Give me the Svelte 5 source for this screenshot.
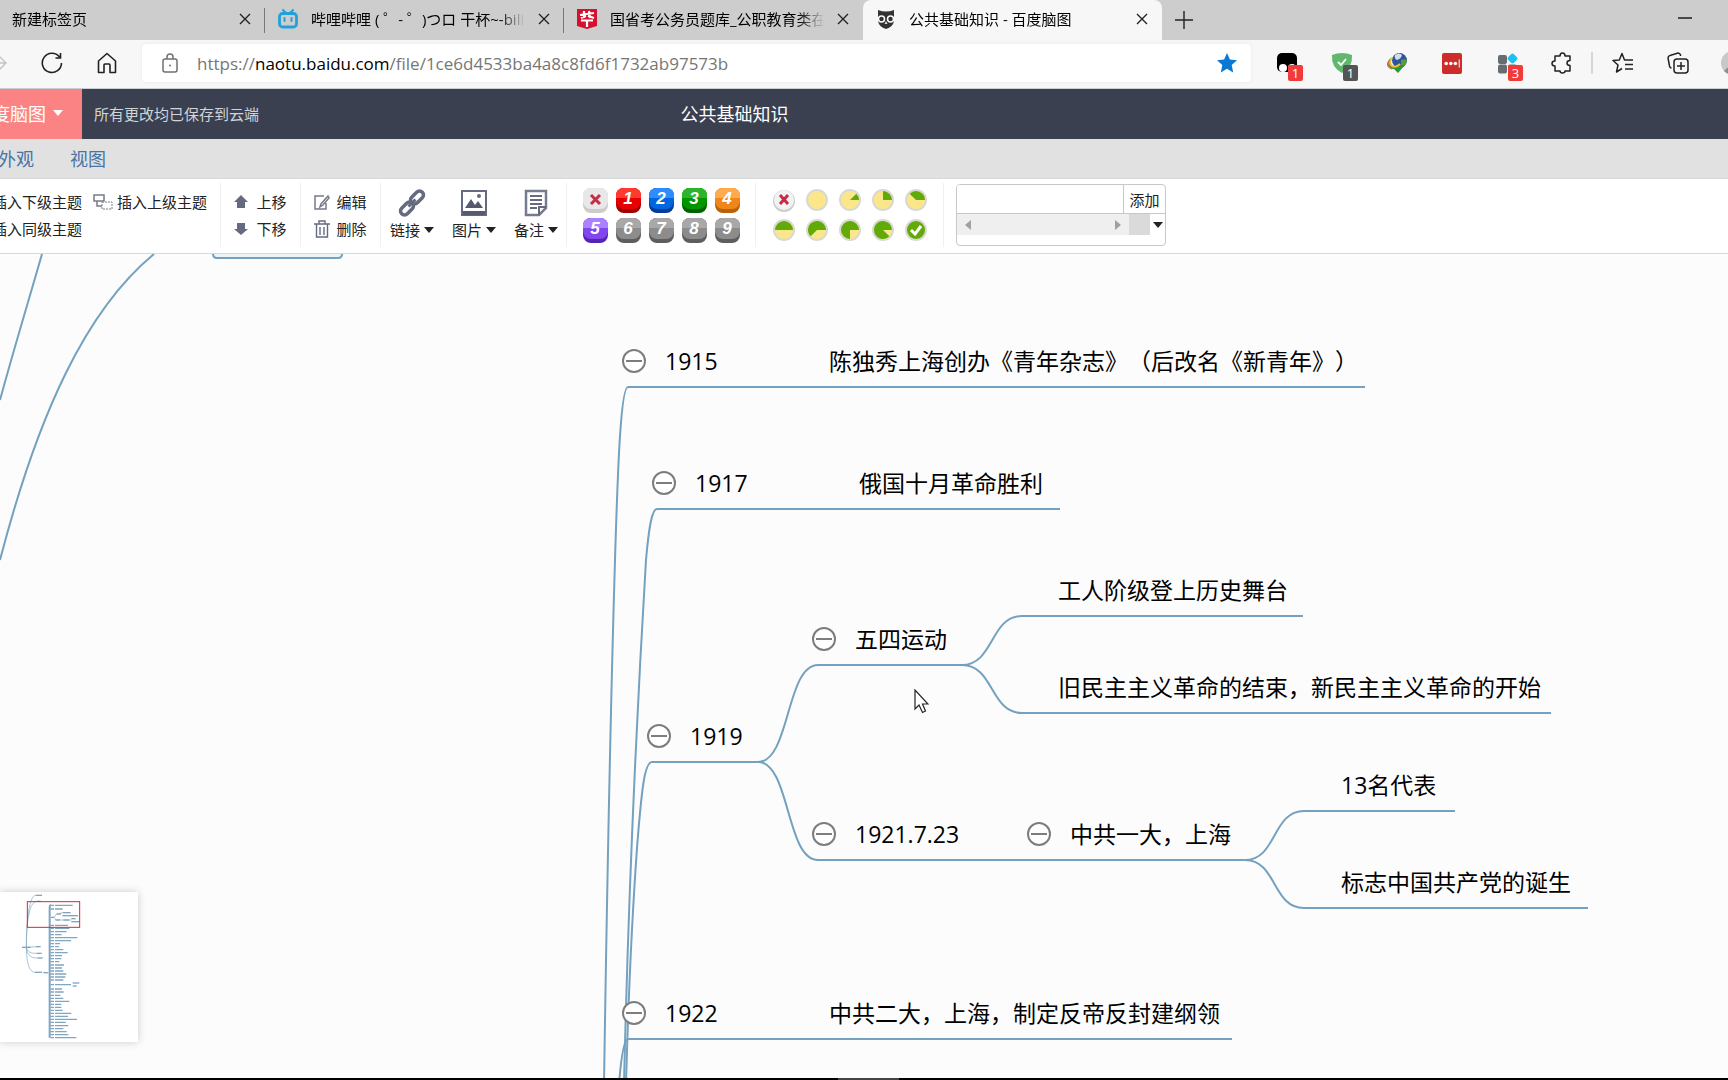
<script lang="ts">
  interface TopicNode {
    x: number;
    y: number;
    text: string;
    toggle?: boolean;
  }

  const TABS = [
    { title: '新建标签页', icon: 'blank', active: false },
    { title: '哔哩哔哩 ( ゜- ゜)つロ 干杯~-bilibili', icon: 'bili', active: false },
    { title: '国省考公务员题库_公职教育类在线', icon: 'exam', active: false },
    { title: '公共基础知识 - 百度脑图', icon: 'owl', active: true }
  ];

  const PRIORITIES = [
    { value: 1, top: '#ff3a2e', mid: '#e60000', edge: '#a00000' },
    { value: 2, top: '#2e8cff', mid: '#0066e0', edge: '#003c9a' },
    { value: 3, top: '#2cb52c', mid: '#009600', edge: '#006200' },
    { value: 4, top: '#ffab4d', mid: '#f08519', edge: '#b8620c' },
    { value: 5, top: '#ab82ff', mid: '#8246ef', edge: '#5325b4' },
    { value: 6, top: '#a8a8a8', mid: '#8c8c8c', edge: '#5e5e5e' },
    { value: 7, top: '#a8a8a8', mid: '#8c8c8c', edge: '#5e5e5e' },
    { value: 8, top: '#a8a8a8', mid: '#8c8c8c', edge: '#5e5e5e' },
    { value: 9, top: '#a8a8a8', mid: '#8c8c8c', edge: '#5e5e5e' }
  ];

  const PROGRESS = [0, 1, 2, 3, 4, 5, 6, 7, 8];

  // y is the underline the topic sits on
  const NODES: TopicNode[] = [
    { x: 665, y: 133, text: '1915', toggle: true },
    { x: 829, y: 133, text: '陈独秀上海创办《青年杂志》（后改名《新青年》）' },
    { x: 695, y: 255, text: '1917', toggle: true },
    { x: 859, y: 255, text: '俄国十月革命胜利' },
    { x: 690, y: 508, text: '1919', toggle: true },
    { x: 855, y: 411, text: '五四运动', toggle: true },
    { x: 1058, y: 362, text: '工人阶级登上历史舞台' },
    { x: 1058, y: 459, text: '旧民主主义革命的结束，新民主主义革命的开始' },
    { x: 855, y: 606, text: '1921.7.23', toggle: true },
    { x: 1070, y: 606, text: '中共一大，上海', toggle: true },
    { x: 1341, y: 557, text: '13名代表' },
    { x: 1341, y: 654, text: '标志中国共产党的诞生' },
    { x: 665, y: 785, text: '1922', toggle: true },
    { x: 829, y: 785, text: '中共二大，上海，制定反帝反封建纲领' }
  ];

  const EDGES = [
    'M42 0C30 42 13 98 0 146',
    'M154 0C86 56 38 160 0 306',
    'M604 830C606 700 609 506 615 306C618 206 621 133 628 133H1365',
    'M624 830C627 700 634 506 646 306C649 272 652 255 657 255H1060',
    'M626 830C629 720 633 650 637 594C642 530 645 508 652 508H760',
    'M619 830C621 805 624 785 628 785H1232',
    'M758 508C790 508 786 411 818 411H968',
    'M758 508C790 508 786 606 818 606H1250',
    'M962 411C994 411 990 362 1022 362H1303',
    'M962 411C994 411 990 459 1022 459H1551',
    'M1245 606C1277 606 1272 557 1304 557H1455',
    'M1245 606C1277 606 1272 654 1304 654H1588'
  ];

  // [y, end of the topic text]
  const MAP_ROWS = [
    [106, 218], [117, 188], [166, 204], [175, 208], [185, 200], [194, 185], [203, 232], [212, 213],
    [221, 180], [230, 177], [239, 190], [248, 203], [257, 186], [266, 184], [275, 178], [285, 192],
    [294, 186], [303, 190], [312, 199], [321, 196], [330, 190], [344, 213], [357, 186], [366, 191],
    [376, 181], [385, 190], [394, 208], [403, 184], [412, 184], [421, 188], [430, 214], [439, 204],
    [448, 231], [457, 197], [467, 205], [476, 190], [485, 200], [494, 205], [503, 229]
  ];

  const MAP_EXTRA = [
    [107, 126, 76], [112, 122, 94], [66, 92, 232], [108, 122, 230], [110, 125, 250], [112, 128, 264],
    [105, 126, 307], [130, 145, 308], [153, 162, 142], [170, 183, 132], [188, 212, 128], [187, 234, 137],
    [167, 180, 150], [190, 208, 150], [214, 227, 146], [214, 238, 155], [218, 238, 339], [218, 230, 348]
  ];

  let tagText = $state('');

  // wedge opens counter-clockwise from three o'clock
  function pie(step: number) {
    const angle = (step / 8) * Math.PI * 2;
    const x = 11 + 9 * Math.cos(angle);
    const y = 11 - 9 * Math.sin(angle);
    return `M11 11H20A9 9 0 ${step > 4 ? 1 : 0} 0 ${x} ${y}Z`;
  }
</script>

{#snippet close()}
  <svg width="12" height="12" viewBox="0 0 12 12"><path d="M1 1L11 11M11 1L1 11" stroke="#222" stroke-width="1.4" /></svg>
{/snippet}

{#snippet caret()}
  <svg class="caret" width="10" height="6" viewBox="0 0 10 6"><path d="M0 0H10L5 6Z" fill="currentColor" /></svg>
{/snippet}

<div class="page">
  <div class="tab-strip">
    {#each TABS as tab}
      <div class="tab" class:tab-active={tab.active}>
        <svg class="tab-icon" width="20" height="20" viewBox="0 0 20 20">
          {#if tab.icon === 'bili'}
            <path d="M5 1L8 4M15 1L12 4" stroke="#1fa2dc" stroke-width="2" stroke-linecap="round" />
            <rect x="1.5" y="4.5" width="17" height="13.500" rx="3" fill="none" stroke="#1fa2dc" stroke-width="2.800" />
            <path d="M6.500 9V12M13.500 9V12" stroke="#1fa2dc" stroke-width="2" stroke-linecap="round" />
          {:else if tab.icon === 'exam'}
            <path d="M0 0H20V17L10 20L0 17Z" fill="#d5112f" />
            <path d="M3 6L17 4M7 2V9M12 2L13 9M4 9L9 7M11 7L17 9M4 11.500H16M10 11V18" stroke="#fff" stroke-width="2.200" fill="none" />
          {:else if tab.icon === 'owl'}
            <path d="M2 1Q10 4 18 1V12Q17 18 10 20Q3 18 2 12Z" fill="#333" />
            <circle cx="5.500" cy="10" r="3" fill="none" stroke="#fff" stroke-width="1.5" />
            <circle cx="14.500" cy="10" r="3" fill="none" stroke="#fff" stroke-width="1.5" />
            <path d="M10 12L8.500 15H11.500Z" fill="#ddd" />
          {/if}
        </svg>
        <span class="tab-title">{tab.title}</span>
        <button class="tab-close" aria-label="关闭标签页">{@render close()}</button>
      </div>
    {/each}
    <button class="new-tab" aria-label="新建标签页">
      <svg width="18" height="18" viewBox="0 0 18 18"><path d="M9 0V18M0 9H18" stroke="#222" stroke-width="1.4" /></svg>
    </button>
    <button class="minimize" aria-label="最小化">
      <svg width="14" height="2" viewBox="0 0 14 2"><path d="M0 1H14" stroke="#111" stroke-width="1.4" /></svg>
    </button>
  </div>

  <div class="browser-bar">
    <button class="nav-btn" aria-label="前进">
      <svg width="20" height="20" viewBox="0 0 20 20" fill="none" stroke="#c4c4c4" stroke-width="1.5"><path d="M1 10H19M12 3L19 10L12 17" /></svg>
    </button>
    <button class="nav-btn" aria-label="刷新">
      <svg width="22" height="22" viewBox="0 0 22 22" fill="none" stroke="#222" stroke-width="1.6"><path d="M18.500 5A9.600 9.600 0 1 0 20.500 11M19.500 1V6H14.500" /></svg>
    </button>
    <button class="nav-btn" aria-label="主页">
      <svg width="20" height="22" viewBox="0 0 20 22" fill="none" stroke="#222" stroke-width="1.6" stroke-linejoin="round"><path d="M1.500 9L10 1.500L18.500 9V20.500H13V13Q13 12 12 12H8Q7 12 7 13V20.500H1.500Z" /></svg>
    </button>
    <div class="address">
      <svg width="16" height="20" viewBox="0 0 16 20" fill="none" stroke="#707070" stroke-width="1.5"><rect x="1" y="6" width="14" height="13" rx="2" /><path d="M5 6V4Q5 1 8 1T11 4V6" /><circle cx="8" cy="12.500" r="1" fill="#707070" stroke="none" /></svg>
      <span class="url">https://<b>naotu.baidu.com</b>/file/1ce6d4533ba4a8c8fd6f1732ab97573b</span>
      <button class="star" aria-label="收藏">
        <svg width="20" height="20" viewBox="0 0 20 20"><path d="M10 0L12.900 6.500L20 7.300L14.700 12.100L16.200 19.500L10 15.800L3.800 19.500L5.300 12.100L0 7.300L7.100 6.500Z" fill="#0a78d4" /></svg>
      </button>
    </div>
    <button class="nav-btn" aria-label="脚本扩展">
      <svg width="22" height="22" viewBox="0 0 22 22"><rect x="1" y="1" width="20" height="19" rx="5" /><circle cx="7" cy="16" r="4" fill="#fff" /><circle cx="16" cy="16" r="4" fill="#fff" /></svg>
      <span class="badge">1</span>
    </button>
    <button class="nav-btn" aria-label="广告拦截">
      <svg width="22" height="22" viewBox="0 0 22 22"><path d="M11 1Q16 1 21 3Q22 15 11 21Q0 15 1 3Q6 1 11 1Z" fill="#62b76f" /><path d="M7 10L10 13L15 7" fill="none" stroke="#fff" stroke-width="1.800" /></svg>
      <span class="badge badge-dark">1</span>
    </button>
    <button class="nav-btn" aria-label="下载器">
      <svg width="22" height="22" viewBox="0 0 22 22">
        <circle cx="13.500" cy="8.500" r="7.500" fill="#2d559c" />
        <path d="M9 3Q13 0 16 3Q15 7 11 8Q8 7 9 3Z" fill="#d3dfe8" />
        <path d="M15 8Q20 6 21 9Q20 14 15 15Z" fill="#5c9b3b" />
        <path d="M7 5Q2 9 5 13Q9 17 14 13H19L12 21L8 17Q1 17 1 12Q2 7 7 5Z" fill="#2c9636" />
        <path d="M6 6Q2 11 6 14Q10 16 14 12" fill="none" stroke="#f0c32d" stroke-width="2" />
        <path d="M3 9Q0 14 6 17" fill="none" stroke="#d8705a" stroke-width="1.500" />
      </svg>
    </button>
    <button class="nav-btn" aria-label="密码管理">
      <svg width="20" height="21" viewBox="0 0 20 21"><rect width="20" height="21" rx="2" fill="#cf2b2b" /><g fill="#fff"><circle cx="4.200" cy="10.500" r="1.800" /><circle cx="8.800" cy="10.500" r="1.800" /><circle cx="13.400" cy="10.500" r="1.800" /><path d="M16.700 6.500H17.700V14.500H16.700Z" /></g></svg>
    </button>
    <button class="nav-btn" aria-label="扩展管理">
      <svg width="22" height="22" viewBox="0 0 22 22" fill="#666c70"><rect x="2" y="3" width="9" height="9" rx="2" /><rect x="2" y="12.500" width="9" height="9" rx="2" /><rect x="12" y="12.500" width="9" height="9" rx="2" /><rect x="12.500" y="2.500" width="8" height="8" rx="2" fill="#19c1f5" transform="rotate(45 16.500 6.500)" /></svg>
      <span class="badge">3</span>
    </button>
    <button class="nav-btn" aria-label="扩展">
      <svg width="22" height="22" viewBox="0 0 22 22" fill="none" stroke="#222" stroke-width="1.500" stroke-linejoin="round"><path d="M4 4H9Q9 1 11.500 1T14 4H19V8.500Q16 8.500 16 11T19 13.500V19H14Q14 21 11.500 21T9 19H4V14Q1 14 1 11.500T4 9Z" /></svg>
    </button>
    <span class="bar-divider"></span>
    <button class="nav-btn" aria-label="收藏夹">
      <svg width="22" height="22" viewBox="0 0 22 22" fill="none" stroke="#222" stroke-width="1.500" stroke-linejoin="round"><path d="M13.500 8H12.500L10 1.500L7.300 8L1 8.500L6 13L4.500 20L10 16.500M13.500 8H21M13 12.500H21M13 17H21" /></svg>
    </button>
    <button class="nav-btn" aria-label="集锦">
      <svg width="22" height="22" viewBox="0 0 22 22" fill="none" stroke="#222" stroke-width="1.500"><path d="M4.500 16Q3 16 2.500 14L1 6Q1 4 3 3.500L11 1Q13 1 13.500 3V4" /><rect x="7" y="7" width="14" height="14" rx="3" /><path d="M14 10V18M10 14H18" /></svg>
    </button>
    <button class="nav-btn" aria-label="用户">
      <svg width="24" height="24" viewBox="0 0 24 24"><circle cx="12" cy="12" r="12" fill="#c8c8c8" /><path d="M3 20Q12 10 21 20Q12 28 3 20Z" fill="#8d8d8d" /></svg>
    </button>
  </div>

  <header class="app-header">
    <button class="brand">百度脑图 {@render caret()}</button>
    <span class="save-state">所有更改均已保存到云端</span>
    <h1>公共基础知识</h1>
  </header>

  <nav class="menu">
    <a href="#look">外观</a>
    <a href="#view">视图</a>
  </nav>

  <div class="ribbon">
    <div class="group group-insert">
      <button class="tool">插入下级主题</button>
      <button class="tool">
        <svg width="20" height="16" viewBox="0 0 20 16" fill="none" stroke="#777a8c" stroke-width="1.500"><rect x="1" y="1" width="10" height="6" /><path d="M4 7V12H9" /><path d="M9 8H19V15H9Z" stroke-dasharray="2 1" stroke-width="1" /></svg>
        插入上级主题
      </button>
      <button class="tool">插入同级主题</button>
    </div>
    <div class="group group-pair group-move">
      <button class="tool">
        <svg width="14" height="14" viewBox="0 0 14 14"><path d="M7 0L14 7H11V13H3V7H0Z" fill="#666a80" /></svg>上移
      </button>
      <button class="tool">
        <svg width="14" height="14" viewBox="0 0 14 14"><path d="M7 13L14 7H11V1H3V7H0Z" fill="#666a80" /></svg>下移
      </button>
    </div>
    <div class="group group-pair">
      <button class="tool">
        <svg width="16" height="16" viewBox="0 0 16 16" fill="none" stroke="#777a8c" stroke-width="1.500"><path d="M10 2H1V15H12V9M14 2L7 10L6 13L9 11L15 4Z" /></svg>编辑
      </button>
      <button class="tool">
        <svg width="16" height="18" viewBox="0 0 16 18" fill="none" stroke="#666a80" stroke-width="1.400"><path d="M0 4H16M5 4V1H11V4M2.500 4V17H13.500V4M6 7V15M10 7V15" /></svg>删除
      </button>
    </div>
    <div class="group group-large">
      <button class="large-tool">
        <svg width="28" height="28" viewBox="0 0 28 28" fill="none" stroke="#666a80" stroke-width="3.500"><rect x="11.500" y="4.500" width="15" height="8" rx="4" transform="rotate(-45 19 8.500)" /><rect x="1.500" y="15.500" width="15" height="8" rx="4" transform="rotate(-45 9 19.500)" /><path d="M10.500 17.500L17.500 10.500" stroke-width="3" /></svg>
        <span>链接 {@render caret()}</span>
      </button>
      <button class="large-tool">
        <svg width="26" height="28" viewBox="0 0 26 28"><rect x="1" y="2" width="24" height="24" fill="#fff" stroke="#666a80" stroke-width="2" /><path d="M2 22H24V26H2ZM4 19L10 10L14 16L17 12L22 19Z" fill="#555a70" /><circle cx="18" cy="7" r="2" fill="#666a80" /></svg>
        <span>图片 {@render caret()}</span>
      </button>
      <button class="large-tool">
        <svg width="26" height="28" viewBox="0 0 26 28"><path d="M3 2H23V19L16 26H3Z" fill="#fff" stroke="#777b90" stroke-width="2.500" /><path d="M7 7H19M7 11H19M7 15H19M7 19H14M23 18H16V26" fill="none" stroke="#666a80" stroke-width="2" /></svg>
        <span>备注 {@render caret()}</span>
      </button>
    </div>
    <div class="group icon-grid">
      <button aria-label="移除优先级">
        <svg width="25" height="25" viewBox="0 0 25 25"><rect width="25" height="25" rx="8" fill="#ccc" /><rect width="25" height="21" rx="8" fill="#e8e8e8" /><path d="M8 7L17 16M17 7L8 16" stroke="#c42d45" stroke-width="3" /></svg>
      </button>
      {#each PRIORITIES as p}
        <button aria-label="优先级 {p.value}">
          <svg width="25" height="25" viewBox="0 0 25 25">
            <rect width="25" height="25" rx="8" fill={p.edge} />
            <rect width="25" height="21" rx="8" fill={p.mid} />
            <path d="M0 10V8Q0 0 8 0H17Q25 0 25 8V10Z" fill={p.top} />
            <text x="12" y="16" text-anchor="middle" class="priority-num">{p.value}</text>
          </svg>
        </button>
      {/each}
    </div>
    <div class="group icon-grid icon-grid-round">
      <button aria-label="移除进度">
        <svg width="24" height="24" viewBox="-1 -1 24 24"><circle cx="11" cy="12" r="11" fill="#ccc" /><circle cx="11" cy="11" r="10" fill="#f2f2f2" /><path d="M7 6L15 15M15 6L7 15" stroke="#c42d45" stroke-width="3" /></svg>
      </button>
      {#each PROGRESS as step}
        <button aria-label="进度 {step}/8">
          <svg width="24" height="24" viewBox="-1 -1 24 24">
            <circle cx="11" cy="11" r="11" fill="#d9d9d4" />
            <circle cx="11" cy="11" r="9" fill={step === 8 ? '#62aa08' : '#fbe68a'} />
            {#if step > 0 && step < 8}<path d={pie(step)} fill="#62aa08" />{/if}
            {#if step === 8}<path d="M6 11L10 15L16 7" fill="none" stroke="#fff" stroke-width="3" />{/if}
          </svg>
        </button>
      {/each}
    </div>
    <div class="tag-box">
      <div class="tag-entry">
        <input aria-label="标签" bind:value={tagText} />
        <button>添加</button>
      </div>
      <div class="tag-list">
        <div class="scroller">
          <svg width="6" height="10" viewBox="0 0 6 10"><path d="M6 0V10L0 5Z" fill="#a0a0a0" /></svg>
          <svg width="6" height="10" viewBox="0 0 6 10"><path d="M0 0V10L6 5Z" fill="#a0a0a0" /></svg>
        </div>
        <span class="corner"></span>
        <button aria-label="展开标签">{@render caret()}</button>
      </div>
    </div>
  </div>

  <main class="canvas">
    <svg class="edges" fill="none" stroke="#73a1bf" stroke-width="2">
      <path d="M213 -8V0Q213 4 217 4H338Q342 4 342 0V-8" fill="#eef3f6" />
      {#each EDGES as d}
        <path {d} />
      {/each}
      {#each NODES.filter((n) => n.toggle) as n}
        <g stroke="#7d7d7d">
          <circle cx={n.x - 31} cy={n.y - 26} r="11" fill="#fff" />
          <path d="M{n.x - 39} {n.y - 26}h16" />
        </g>
      {/each}
    </svg>

    {#each NODES as node}
      <span class="topic" style="left: {node.x}px; top: {node.y - 43}px">{node.text}</span>
    {/each}

    <svg class="pointer" width="15" height="25" viewBox="0 0 15 25"><path d="M1 1V20L5 16L8.500 23.500L11.500 22L8.500 15H14Z" fill="#fff" stroke="#222" stroke-width="1.200" /></svg>

    <div class="minimap">
      <svg width="138" height="150" viewBox="0 66 414 450" fill="none" stroke="#7fa6c0">
        <path d="M79 232C79 150 88 76 107 76M79 232C80 130 92 94 112 94M79 232C80 280 88 307 105 307M79 234C84 262 98 264 112 264M79 234C86 250 98 250 110 250M79 232L108 230M162 142L170 132L188 128M162 142L167 150H214" stroke-width="2" />
        <path d="M149 503V112Q149 106 153 106" stroke-width="6" />
        {#each MAP_ROWS as [y, end]}
          <path d="M151 {y}H162M165 {y}H{end}" stroke-width="4" />
        {/each}
        {#each MAP_EXTRA as [from, to, y]}
          <path d="M{from} {y}H{to}" stroke-width="4" />
        {/each}
        <rect x="82" y="95" width="157" height="77" stroke="#e02430" stroke-width="3" />
      </svg>
    </div>
  </main>

  <div class="taskbar-edge"></div>
</div>

<style>
  :global(body) {
    background: #fcfcfc;
  }

  .page {
    display: flex;
    flex-direction: column;
    min-height: 100vh;
    overflow: hidden;
    color: #000;
    font-family: 'Open Sans', 'Noto Sans CJK SC', sans-serif;
    font-size: 15px;
    text-spacing-trim: space-all;
  }

  button {
    display: flex;
    align-items: center;
    justify-content: center;
    padding: 0;
    border: 0;
    background: none;
    color: inherit;
    font: inherit;
    white-space: nowrap;
  }

  svg {
    flex: none;
    display: block;
  }

  .tab-strip {
    display: flex;
    height: 40px;
    margin-left: -34px;
    background: #cdcdcd;
  }

  .tab {
    display: flex;
    align-items: center;
    box-sizing: border-box;
    flex: 0 1 299px;
    min-width: 0;
    padding: 0 13px 2px;
    background: linear-gradient(#777, #777) right center / 1px 25px no-repeat;
  }

  .tab:nth-child(3) {
    background: none;
  }

  .tab-active {
    border-radius: 8px 8px 0 0;
    background: #f7f7f7;
  }

  .tab-title {
    flex: 1;
    min-width: 0;
    margin: 0 12px 0 13px;
    overflow: hidden;
    white-space: nowrap;
    line-height: 24px;
    mask-image: linear-gradient(90deg, #000 88%, transparent);
  }

  .tab-close {
    width: 14px;
    height: 14px;
  }

  .new-tab {
    width: 44px;
  }

  .minimize {
    width: 44px;
    margin: 0 21px 4px auto;
  }

  .browser-bar {
    display: flex;
    align-items: center;
    box-sizing: border-box;
    height: 49px;
    margin: 0 -32px 0 -31px;
    padding-bottom: 2px;
    background: #f7f7f7;
    border-bottom: 1px solid #c9cdd4;
  }

  .nav-btn {
    position: relative;
    width: 55px;
    height: 40px;
    flex: none;
  }

  .address {
    display: flex;
    align-items: center;
    flex: 1;
    min-width: 0;
    height: 38px;
    margin: 0 8px;
    padding: 0 14px 0 20px;
    gap: 19px;
    box-sizing: border-box;
    border-radius: 4px;
    background: #fff;
    box-shadow: 0 0 3px #e4e4e4;
  }

  .url {
    flex: 1;
    overflow: hidden;
    color: #767676;
    font-size: 17px;
    white-space: nowrap;
  }

  .url b {
    color: #000;
    font-weight: 400;
  }

  .badge {
    position: absolute;
    left: 29px;
    top: 22px;
    width: 15px;
    height: 16px;
    border-radius: 2px;
    background: #f23a3a;
    color: #fff;
    font-size: 13px;
    line-height: 16px;
    text-align: center;
  }

  .badge-dark {
    background: #555;
  }

  .bar-divider {
    width: 2px;
    height: 22px;
    margin: 0 2px;
    background: #d6d6d6;
  }

  .app-header {
    position: relative;
    display: flex;
    align-items: center;
    box-sizing: border-box;
    height: 50px;
    padding-bottom: 2px;
    background: #3a404f;
    color: #fff;
  }

  .brand {
    align-self: flex-start;
    gap: 7px;
    width: 108px;
    height: 50px;
    margin-left: -26px;
    padding: 0 19px 2px 0;
    box-sizing: border-box;
    justify-content: flex-end;
    background: #fc8383;
    font-size: 18px;
  }

  .save-state {
    margin-left: 12px;
    color: #d2d4d8;
  }

  h1 {
    position: absolute;
    left: 0;
    right: 0;
    margin: 0;
    padding-right: 259px;
    font-size: 18px;
    font-weight: 400;
    text-align: center;
    pointer-events: none;
  }

  .menu {
    display: flex;
    align-items: center;
    box-sizing: border-box;
    gap: 36px;
    height: 40px;
    margin-left: -2px;
    padding-bottom: 2px;
    border-bottom: 1px solid #d8d8d8;
    background: #e1e1e1;
    font-size: 18px;
  }

  .menu a {
    color: #4874a8;
    text-decoration: none;
  }

  .ribbon {
    display: flex;
    align-items: center;
    box-sizing: border-box;
    height: 75px;
    padding-bottom: 2px;
    border-bottom: 1px solid #d8d8d8;
    background: #fff;
    color: #222;
  }

  .group {
    display: grid;
    box-sizing: border-box;
    height: 64px;
    flex: none;
    border-right: 1px solid #f0f0f0;
    align-content: center;
  }

  .group-insert {
    grid-template-columns: repeat(2, max-content);
    column-gap: 11px;
    width: 229px;
    margin-left: -8px;
  }

  .tool {
    gap: 4px;
    height: 27px;
  }

  .group-pair {
    width: 80px;
    justify-content: center;
  }

  .group-pair .tool {
    gap: 6px;
  }

  .group-move .tool {
    gap: 8px;
  }

  .group-large {
    grid-template-columns: repeat(3, 62px);
    width: 186px;
  }

  .large-tool {
    flex-direction: column;
    gap: 2px;
  }

  .large-tool span {
    display: flex;
    align-items: center;
    gap: 4px;
    line-height: 22px;
  }

  .icon-grid {
    grid-template-columns: repeat(5, 25px);
    justify-content: center;
    gap: 5px 8px;
    width: 189px;
  }

  .icon-grid-round {
    grid-template-columns: repeat(5, 24px);
    gap: 6px 9px;
    width: 188px;
  }

  .priority-num {
    fill: #fff;
    font: italic bold 17px 'Liberation Sans', sans-serif;
  }

  .tag-box {
    width: 208px;
    height: 60px;
    margin-left: 12px;
    border: 1px solid #c8c8c8;
    border-radius: 4px;
    overflow: hidden;
  }

  .tag-entry {
    display: flex;
    height: 28px;
    border-bottom: 1px solid #c8c8c8;
  }

  .tag-entry input {
    flex: 1;
    min-width: 0;
    padding: 0 6px;
    border: 0;
    border-right: 1px solid #c8c8c8;
    outline: none;
    font: inherit;
  }

  .tag-entry button {
    width: 41px;
  }

  .tag-list {
    display: flex;
    height: 21px;
  }

  .scroller {
    display: flex;
    align-items: center;
    justify-content: space-between;
    flex: 1;
    padding: 0 8px;
    background: #efefef;
  }

  .corner {
    width: 21px;
    background: #dadada;
  }

  .tag-list button {
    width: 15px;
  }

  .canvas {
    position: relative;
    flex: 1;
    min-height: 720px;
    overflow: hidden;
    background: #fcfcfc;
  }

  .edges {
    position: absolute;
    inset: 0;
    width: 100%;
    height: 100%;
  }

  .topic {
    position: absolute;
    font-size: 23px;
    line-height: 34px;
    white-space: nowrap;
  }

  .pointer {
    position: absolute;
    left: 914px;
    top: 435px;
  }

  .minimap {
    position: absolute;
    left: 0;
    bottom: 36px;
    background: #fff;
    box-shadow: 0 0 8px rgba(0, 0, 0, 0.2);
  }

  .taskbar-edge {
    height: 2px;
    background: linear-gradient(#444, #444) 838px 0 / 61px 2px no-repeat #000;
  }
</style>
